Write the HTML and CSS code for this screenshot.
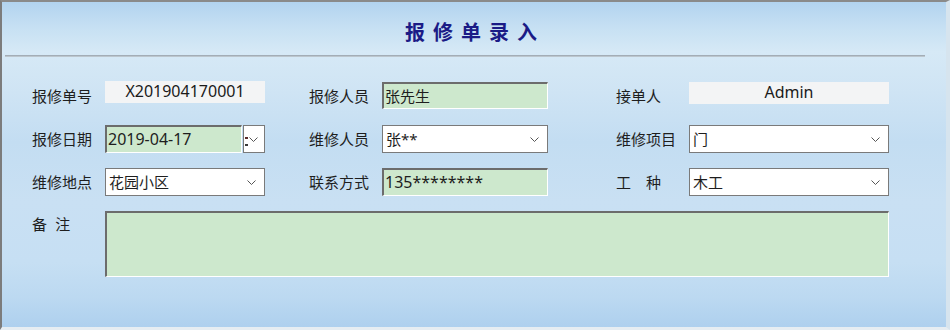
FILE: index.html
```html
<!DOCTYPE html>
<html lang="zh-CN">
<head>
<meta charset="utf-8">
<title>报修单录入</title>
<link rel="stylesheet" href="styles.css">
</head>
<body>
<div class="window">
  <div class="header">
    <h1 class="title">报修单录入</h1>
    <div class="separator"></div>
  </div>
  <div class="form">
    <div class="label c1">报修单号</div>
    <div class="field c2 readonly lat top">X201904170001</div>
    <div class="label c3">报修人员</div>
    <div class="field c4 sunken r1">张先生</div>
    <div class="label c5">接单人</div>
    <div class="field c6 readonly lat">Admin</div>

    <div class="label c1">报修日期</div>
    <div class="c2 datecell">
      <div class="field sunken date lat">2019-04-17</div>
      <div class="dropbtn"><span class="tick"></span><svg class="chev" width="9" height="5" viewBox="0 0 9 5"><path d="M0.5 0.5 L4.5 4.5 L8.5 0.5" fill="none" stroke="#555" stroke-width="1"/></svg></div>
    </div>
    <div class="label c3">维修人员</div>
    <div class="field c4 select"><span>张**</span><svg class="chev" width="9" height="5" viewBox="0 0 9 5"><path d="M0.5 0.5 L4.5 4.5 L8.5 0.5" fill="none" stroke="#555" stroke-width="1"/></svg></div>
    <div class="label c5">维修项目</div>
    <div class="field c6 select"><span>门</span><svg class="chev" width="9" height="5" viewBox="0 0 9 5"><path d="M0.5 0.5 L4.5 4.5 L8.5 0.5" fill="none" stroke="#555" stroke-width="1"/></svg></div>

    <div class="label c1">维修地点</div>
    <div class="field c2 select"><span>花园小区</span><svg class="chev" width="9" height="5" viewBox="0 0 9 5"><path d="M0.5 0.5 L4.5 4.5 L8.5 0.5" fill="none" stroke="#555" stroke-width="1"/></svg></div>
    <div class="label c3">联系方式</div>
    <div class="field c4 sunken lat">135********</div>
    <div class="label c5">工　种</div>
    <div class="field c6 select"><span>木工</span><svg class="chev" width="9" height="5" viewBox="0 0 9 5"><path d="M0.5 0.5 L4.5 4.5 L8.5 0.5" fill="none" stroke="#555" stroke-width="1"/></svg></div>

    <div class="label c1 note-label">备 注</div>
    <div class="field sunken note"></div>
  </div>
</div>
</body>
</html>
```

FILE: styles.css
```css
html, body {
  margin: 0;
  padding: 0;
}
body {
  font-family: "Noto Sans CJK SC", "Noto Sans", sans-serif;
  color: #1e1e1e;
}
.window {
  box-sizing: border-box;
  width: 950px;
  height: 330px;
  border-left: 2px solid #7c7c7c;
  border-top: 2px solid #8a8a8a;
  border-right: 4px solid #d6e4ee;
  border-bottom: 3px solid #e6edf2;
  background: linear-gradient(180deg,
    #b2d3ef 0px,
    #c6e0f3 25px,
    #d6e9f6 50px,
    #cfe4f4 90px,
    #c3ddf2 140px,
    #c9e0f3 200px,
    #c6dff3 260px,
    #bcd9f1 295px,
    #aed0ee 325px);
  overflow: hidden;
}
.header {
  padding-top: 15px;
}
.title {
  margin: 0;
  height: 30px;
  line-height: 30px;
  text-align: center;
  font-size: 20px;
  font-weight: 700;
  letter-spacing: 8px;
  color: #1b1b86;
  padding-left: 12px;
  padding-right: 10px;
}
.separator {
  margin: 8px 21px 0 3px;
  height: 1px;
  background: #a3adb6;
  border-bottom: 1px solid #bcc6cd;
}
.form {
  margin-top: 25px;
  padding-left: 30px;
  display: grid;
  grid-template-columns: 73px 160px 44px 73px 166px 68px 73px 200px;
  grid-template-rows: 28px 28px 28px 66px;
  row-gap: 15px;
  font-size: 15px;
}
.c1 { grid-column: 1; }
.c2 { grid-column: 2; }
.c3 { grid-column: 4; }
.c4 { grid-column: 5; }
.c5 { grid-column: 7; }
.c6 { grid-column: 8; }
.label {
  align-self: center;
  white-space: nowrap;
  line-height: 20px;
}
.note-label {
  align-self: start;
  word-spacing: 5px;
  margin-top: 3px;
}
.field {
  box-sizing: border-box;
  height: 28px;
  line-height: 24px;
  white-space: nowrap;
  font-family: "Noto Sans", "Noto Sans CJK SC", sans-serif;
}
.lat {
  font-size: 16px;
}
.readonly {
  height: 22px;
  line-height: 20px;
  background: #f3f4f5;
  text-align: center;
  color: #1a1a1a;
  align-self: start;
}
.top { margin-top: -1px; }
.sunken {
  background: #cde8cd;
  border-top: 2px solid #6c6c6c;
  border-left: 2px solid #6c6c6c;
  border-right: 1px solid #ffffff;
  border-bottom: 1px solid #ffffff;
  padding-left: 1px;
  line-height: 24px;
}
.r1 { height: 27px; }
.select {
  background: #ffffff;
  border: 1px solid #7a7a7a;
  padding-left: 3px;
  padding-right: 8px;
  display: flex;
  align-items: center;
  justify-content: space-between;
}
.chev {
  display: block;
  flex: none;
}
.datecell {
  display: flex;
  gap: 1px;
}
.date {
  width: 137px;
}
.dropbtn {
  box-sizing: border-box;
  flex: 1;
  height: 28px;
  background: #ffffff;
  border: 1px solid #7a7a7a;
  display: flex;
  align-items: center;
  justify-content: center;
  gap: 3px;
}
.tick {
  width: 1px;
  height: 9px;
  margin-top: 4px;
  border-top: 2px dotted #5a2a2a;
  border-bottom: 2px dotted #3a3a3a;
  box-sizing: border-box;
  margin-left: -6px;
}
.note {
  grid-column: 2 / 9;
  height: 66px;
}
```
